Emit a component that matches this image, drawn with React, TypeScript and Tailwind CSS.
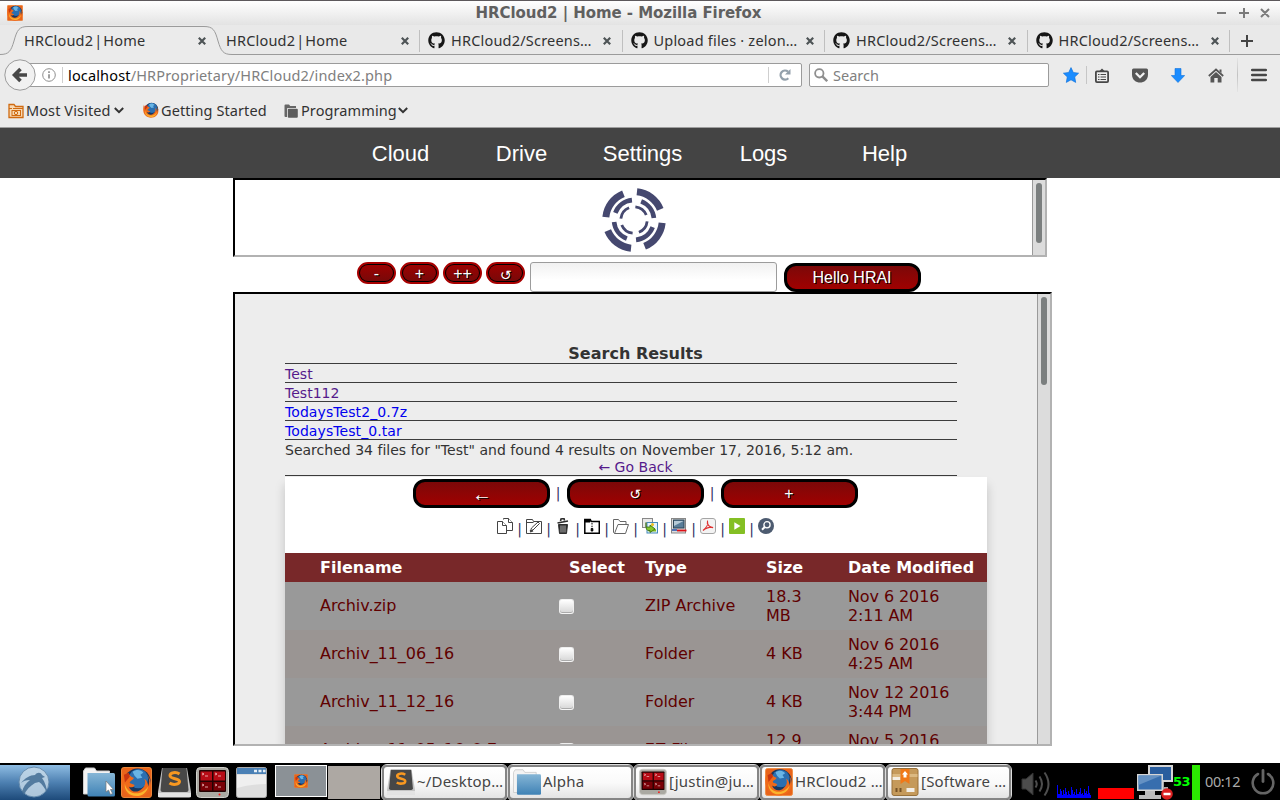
import React from "react";
import { FaGithub } from "react-icons/fa";

const ui = "font-['Noto_Sans',sans-serif] whitespace-nowrap pt-[2px] text-[14.5px] tracking-[0.2px]";

function Firefox({ size, square = false }: { size: number; square?: boolean }) {
  return (
    <svg width={size} height={size} viewBox="0 0 32 32" className="shrink-0">
      {square && <rect x="0.5" y="0.5" width="31" height="31" rx="2.5" fill="#e8641b" stroke="#f08a3c" />}
      <circle cx="17" cy="15" r="13.5" fill="#17375f" />
      <circle cx="18" cy="12" r="10" fill="#2b6fb0" />
      <path d="M12 5c4-3 9-2 11 1l-3 2 2 3-5 1-3-3z" fill="#69b5e5" />
      <path d="M2 5c0 3 1 4 1 6l5-4c1 2 2 3 5 4 1 2-4 3-4 5 1 2 4 1 5 3-2 3-5 2-6 1 2 6 9 7 13 3 4-3 5-7 3-11 3 2 4 5 4 8 2-5 1-9-1-12 5 6 5 14 0 19-6 6-17 6-23-1C-1 20 0 11 2 5z" fill="#ef6a1a" />
      <path d="M4 17c1 7 7 11 14 10 5-1 8-4 10-7-1 6-6 10-12 10C8 30 3 24 4 17z" fill="#fbb42c" />
      <path d="M3 8l5-2 1 4-5 6z" fill="#c8350f" />
    </svg>
  );
}

function CloseX() {
  return (
    <svg width="8" height="8" viewBox="0 0 8 8" className="mt-[1px] shrink-0">
      <path d="M.8.8l6.400 6.400M7.200.8L.8 7.200" stroke="#4e5456" strokeWidth="2.200" />
    </svg>
  );
}

function TitleBar() {
  return (
    <div className="flex h-[25px] w-full items-center border-t border-[#5d595c] bg-linear-to-b from-white to-[#e3e3e3] pl-[7px] pr-[10px]">
      <Firefox size={16} square />
      <div className="flex-1 pr-[2px] text-center font-['DejaVu_Sans',sans-serif] text-[15px] leading-[24px] font-bold text-[#606060]">
        <span className="tracking-[-0.06px]">HRCloud2 | Home - Mozilla Firefox</span>
      </div>
      <svg width="54" height="12" viewBox="0 0 54 12" className="shrink-0" fill="none" stroke="#7b7b7b" strokeWidth="2">
        <path d="M1 6h9M23 6h10M28 1v10M45 2l8 8M53 2l-8 8" />
      </svg>
    </div>
  );
}

function GithubTab({ title }: { title: string }) {
  return (
    <div className="flex h-[30px] w-[202.5px] shrink-0 items-center">
      <div className="mt-[1px] h-[22px] w-px bg-[#bfbfbf]" />
      <FaGithub size={17} color="#161616" className="ml-[8px] shrink-0" />
      <span className={ui + " ml-[6px] w-[152px] text-[#323232]"}>{title}</span>
      <CloseX />
    </div>
  );
}

function TabStrip() {
  return (
    <div className="relative flex h-[30px] w-full bg-[#e9e9e9]">
      <svg width="1280" height="30" viewBox="0 0 1280 30" className="absolute left-0 top-0">
        <path d="M0 29.5C9 29.5 11 26 14 16C17 5 19 1.5 28 1.5H204C213 1.5 215 5 218 16C221 26 223 29.5 232 29.5H1280V30H0Z" fill="#ebebeb" />
        <path d="M0 29.5C9 29.5 11 26 14 16C17 5 19 1.5 28 1.5H204C213 1.5 215 5 218 16C221 26 223 29.5 232 29.5H1280" fill="none" stroke="#9b9b9b" />
      </svg>
      <div className="relative flex w-full items-center">
        <span className={ui + " ml-[24px] w-[174px] text-[#323232] [word-spacing:-3px]"}>HRCloud2 | Home</span>
        <CloseX />
        <span className={ui + " ml-[20px] w-[175px] text-[#323232] [word-spacing:-3px]"}>HRCloud2 | Home</span>
        <CloseX />
        <div className="w-[10px] shrink-0" />
        <GithubTab title="HRCloud2/Screens…" />
        <GithubTab title="Upload files · zelon…" />
        <GithubTab title="HRCloud2/Screens…" />
        <GithubTab title="HRCloud2/Screens…" />
        <div className="mt-[1px] h-[22px] w-px shrink-0 bg-[#bfbfbf]" />
        <svg width="12" height="12" viewBox="0 0 12 12" className="ml-[11px] mt-[1px] shrink-0">
          <path d="M6 0v12M0 6h12" stroke="#444" strokeWidth="2" />
        </svg>
      </div>
    </div>
  );
}

function NavToolbar() {
  return (
    <div className="flex h-[40px] w-full items-center bg-[#ebebeb] pl-[4px]">
      <svg width="32" height="32" viewBox="0 0 32 32" className="relative z-10 shrink-0">
        <circle cx="16" cy="16" r="15.2" fill="#f1f1f1" stroke="#9b9b9b" />
        <path d="M10.500 16H23M16.500 10L10.500 16L16.500 22" fill="none" stroke="#474747" strokeWidth="3.600" />
      </svg>
      <div className="-ml-[8px] flex h-[24px] w-[774px] shrink-0 items-center rounded-r-[2px] border border-[#9b9b9b] bg-white pl-[13px]">
        <svg width="14" height="14" viewBox="0 0 14 14" className="shrink-0">
          <circle cx="7" cy="7" r="6.3" fill="none" stroke="#8f8f8f" />
          <path d="M7 6.3v4.2M7 3.2v1.8" stroke="#8f8f8f" strokeWidth="1.7" />
        </svg>
        <div className="ml-[6px] h-[16px] w-px bg-[#cfcfcf]" />
        <span className="ml-[5px] flex-1 whitespace-nowrap pt-[2px] font-['Noto_Sans',sans-serif] text-[14.5px] tracking-[0.15px] text-[#808080]">
          <span className="text-black">localhost</span>/HRProprietary/HRCloud2/index2.php
        </span>
        <div className="h-[16px] w-px bg-[#cfcfcf]" />
        <svg width="12" height="12" viewBox="0 0 12 12" className="ml-[10px] mr-[10px] shrink-0">
          <path d="M9.3 9.2A4.5 4.5 0 1 1 9 2.6" fill="none" stroke="#93a0ab" strokeWidth="2.3" />
          <path d="M11.5 0v5.6H6z" fill="#93a0ab" />
        </svg>
      </div>
      <div className="ml-[7px] flex h-[24px] w-[240px] shrink-0 items-center rounded-[2px] border border-[#9b9b9b] bg-white pl-[4px]">
        <svg width="14" height="14" viewBox="0 0 14 14" className="shrink-0" fill="none" stroke="#8f8f8f">
          <circle cx="5.3" cy="5.3" r="4.2" strokeWidth="1.8" />
          <path d="M8.4 8.4l4.8 4.8" strokeWidth="2.4" />
        </svg>
        <span className="ml-[5px] pt-[2px] font-['Noto_Sans',sans-serif] text-[14.5px] text-[#808080]">Search</span>
      </div>
      <svg width="16" height="16" viewBox="0 0 16 16" className="ml-[14px] shrink-0">
        <path d="M8 .6l2.3 4.9 5.3.7-3.9 3.7 1 5.500L8 12.800l-4.700 2.600 1-5.500L.4 6.200l5.300-.7z" fill="#1a8cff" stroke="#1274dc" strokeWidth=".7" />
      </svg>
      <div className="ml-[7px] h-[18px] w-px bg-[#c6c6c6]" />
      <svg width="14" height="15" viewBox="0 0 14 15" className="ml-[8px] shrink-0">
        <rect x=".9" y="3.400" width="12.200" height="10.700" rx="1" fill="#ededed" stroke="#474747" strokeWidth="1.800" />
        <path d="M4 3.500L7 .500l3 3z" fill="#474747" />
        <path d="M3 6.500h1.500M5.500 6.500H11M3 9h1.500M5.500 9H11M3 11.500h1.500M5.500 11.500H11" stroke="#474747" strokeWidth="1.200" />
      </svg>
      <svg width="16" height="15" viewBox="0 0 16 15" className="ml-[23px] shrink-0">
        <path d="M1.500.5h13q1.500 0 1.500 1.500v4.500C16 12 12 14.500 8 14.500S0 12 0 6.500V2Q0 .5 1.500.5z" fill="#565656" />
        <path d="M3.800 5l4.200 4.200L12.200 5" fill="none" stroke="#f0f0f0" strokeWidth="2.3" />
      </svg>
      <svg width="14" height="15" viewBox="0 0 14 15" className="ml-[23px] shrink-0">
        <path d="M4 .5h6v7h3.700L7 14.500.3 7.500H4z" fill="#1a8cff" stroke="#1274dc" strokeWidth=".6" />
      </svg>
      <svg width="16" height="15" viewBox="0 0 16 15" className="ml-[23px] shrink-0">
        <path d="M.8 8L8 1.500 15.200 8" fill="none" stroke="#565656" strokeWidth="1.700" />
        <path d="M2.500 9L8 4l5.500 5v5.500H9.700V10H6.300v4.500H2.500z" fill="#565656" />
        <path d="M11.500 1.500h2V5l-2-1.800z" fill="#565656" />
      </svg>
      <div className="ml-[13px] h-[34px] w-px bg-linear-to-b from-[#e4e4e4] via-[#c2c2c2] to-[#e4e4e4]" />
      <svg width="16" height="14" viewBox="0 0 16 14" className="mb-[1px] ml-[13px] shrink-0">
        <path d="M1.200 2h13.600M1.200 7h13.600M1.200 12h13.600" stroke="#474747" strokeWidth="2.600" strokeLinecap="round" />
      </svg>
    </div>
  );
}

function Chevron() {
  return (
    <svg width="10" height="7" viewBox="0 0 10 7" className="ml-[2px] shrink-0">
      <path d="M.8 1L5 5.200 9.200 1" fill="none" stroke="#333" strokeWidth="2" />
    </svg>
  );
}

function BookmarksBar() {
  const label =
    "font-['Noto_Sans',sans-serif] whitespace-nowrap pt-[2px] text-[14.5px] tracking-[0.1px] text-[#323232]";
  return (
    <div className="flex h-[33px] w-full items-center border-b border-[#9e9e9e] bg-[#ebebeb] pb-[2px] pl-[8px]">
      <svg width="16" height="16" viewBox="0 0 16 16" className="mt-[1px] shrink-0" fill="none" stroke="#d06a10">
        <path d="M1 14.500V1.500h5l1.500 2H15v11z" fill="#f7d9b4" strokeWidth="1.300" />
        <path d="M1 5.500h3M5 5.500h10" />
        <rect x="4" y="7.500" width="8.500" height="5" />
        <circle cx="8" cy="10" r="1.700" />
      </svg>
      <span className={label + " ml-[2px] w-[86px]"}>Most Visited</span>
      <Chevron />
      <div className="w-[19px]" />
      <Firefox size={16} />
      <span className={label + " ml-[2px] w-[107px]"}>Getting Started</span>
      <svg width="14" height="14" viewBox="0 0 14 14" className="ml-[16px] mt-[1px] shrink-0">
        <path d="M.5 12V1.500Q.5.500 1.500.500H5l1.200 1.500H12V4H4Q3 4 3 5v8H1.500q-1 0-1-1z" fill="#666" />
        <rect x="3.800" y="4.700" width="10" height="9" rx="1" fill="#5c5c5c" />
      </svg>
      <span className={label + " ml-[3px] w-[95px]"}>Programming</span>
      <Chevron />
    </div>
  );
}

function SiteNav() {
  return (
    <nav className="flex h-[50px] w-full items-center justify-center bg-[#444] font-['Liberation_Sans',sans-serif] text-[22px] text-white">
      <div className="flex pl-[5px]">
        {["Cloud", "Drive", "Settings", "Logs", "Help"].map((t) => (
          <a key={t} className="w-[121px] text-center">{t}</a>
        ))}
      </div>
    </nav>
  );
}

function Swirl() {
  const ring = (r: number, w: number, start: number, span: number) => (
    <circle
      cx="32" cy="32" r={r} pathLength={360} strokeWidth={w}
      strokeDasharray={`${span} ${90 - span}`} transform={`rotate(${start} 32 32)`}
    />
  );
  return (
    <svg width="64" height="64" viewBox="0 0 64 64" fill="none" stroke="#45486f">
      {ring(28.3, 7, -84, 62)}
      {ring(20, 4.6, -69, 63)}
      {ring(13.2, 2.8, -84, 62)}
    </svg>
  );
}

function ScrollTrack({ thumb }: { thumb: string }) {
  return (
    <div className="w-[13px] shrink-0 border-l border-[#9a9a9a] bg-[#dcdcdc] pl-[3px] pt-[3px]">
      <div className={"w-[6px] rounded-full bg-[#7b7f7f] " + thumb} />
    </div>
  );
}

function SmallButton({ children }: { children: React.ReactNode }) {
  return (
    <button className="h-[22px] w-[39px] rounded-[11px] border-2 border-[#a80000] bg-black p-[1px]">
      <span className="flex h-full w-full items-center justify-center rounded-[8px] bg-linear-to-b from-[#9d0000] to-[#780808] pt-[2px] font-['Liberation_Sans','DejaVu_Sans',sans-serif] text-[16px] leading-none text-white [text-shadow:1px_1px_0_#000]">
        {children}
      </span>
    </button>
  );
}

function WideButton({ children }: { children: React.ReactNode }) {
  return (
    <button className="h-[29px] w-[137px] rounded-[12px] border-[3px] border-black bg-linear-to-b from-[#7c0808] to-[#a00000] text-center font-['Liberation_Sans','DejaVu_Sans',sans-serif] text-[16px] leading-[23px] text-white [text-shadow:1px_1px_0_#000]">
      {children}
    </button>
  );
}

const toolIcons: React.ReactNode[] = [
  <g fill="#fff" stroke="#444">
    <path d="M6.500 1.500V.500h5l4 4v8H9.500" /><path d="M11.500.500v4h4" />
    <path d="M.500 3.500h5l4 4v8h-9z" /><path d="M5.500 3.500v4h4" />
  </g>,
  <g fill="none" stroke="#444">
    <path d="M.500 15.500v-14h6l1 2h8v12z" /><path d="M.500 4.500h7" />
    <path d="M4.500 13l1-3 6.500-6 1.500 1.500-6.500 6.500z" /><path d="M4 13.500l3-1" strokeWidth="2" />
  </g>,
  <g fill="#2d2d2d" stroke="#2d2d2d">
    <path d="M3.500 6.500h9l-1 9h-7z" /><path d="M2.500 5l10.500-2M5.500 3l.500-2 3-.500.500 2" fill="none" strokeWidth="1.600" />
    <path d="M6 7.500v7M8 7.500v7M10 7.500v7" stroke="#ccc" strokeWidth=".8" />
  </g>,
  <g fill="none" stroke="#000">
    <path d="M.800 15.200V1.500h5.500l1 2h8v11.700z" strokeWidth="1.500" /><path d="M1 2h5v2H1z" fill="#000" />
    <path d="M8 5v5" strokeWidth="1" strokeDasharray="1.500 1.200" /><path d="M7.200 10.500h1.600v2.500H7.200z" fill="#000" />
  </g>,
  <g fill="none" stroke="#666">
    <path d="M1.500 15.500l-1-1v-13h5l1.500 2h6v3" /><path d="M1.500 15.500L5 6.500h10.500l-3 9z" />
  </g>,
  <g>
    <rect x=".5" y=".5" width="10" height="9" fill="#e9e9e9" stroke="#888" />
    <rect x="5" y="4.500" width="10.500" height="10.500" fill="#e4f2fd" stroke="#4589b8" />
    <path d="M6.500 13.500V11l3-3 4.500 3.500v2z" fill="#7fba1d" />
    <circle cx="10.500" cy="6.500" r="1.500" fill="#f0bf19" />
    <path d="M4 4.500v4.500h4v-2l5 4-5 3.500v-2H6Q4 12 4 9z" fill="#86c92b" stroke="#396b10" strokeWidth=".8" />
  </g>,
  <g>
    <rect x=".5" y=".5" width="14" height="14.500" fill="#ddd" stroke="#888" />
    <rect x="2.500" y="2" width="10.500" height="8" fill="#587d99" stroke="#2c4557" />
    <path d="M3 3h9.500L3 8z" fill="#b6cad7" /><path d="M1 12h5" stroke="#224caa" strokeWidth="1.500" />
    <path d="M6 12.500h9.500" stroke="#e01016" strokeWidth="1.800" />
  </g>,
  <g>
    <rect x=".5" y=".5" width="15" height="15" rx="2.500" fill="#f3f3f3" stroke="#a5a5a5" />
    <path d="M3 12.500C6 10 8.500 6 7.500 3.500 6.500 6 10 10 13 9.500 10 8.500 5 10.500 3 12.500z" fill="none" stroke="#df3030" strokeWidth="1.200" />
  </g>,
  <g>
    <rect width="16" height="16" rx="1" fill="#84bf24" /><path d="M5.300 4.200L11.500 8l-6.200 3.800z" fill="#fff" />
  </g>,
  <g fill="none" stroke="#fff" strokeWidth="1.300">
    <circle cx="8" cy="8" r="8" fill="#4d5b70" stroke="none" /><circle cx="9" cy="6.800" r="3.100" />
    <path d="M6.700 9L4 11.700" strokeWidth="2" />
  </g>,
];

function SearchResults() {
  const line = "border-b border-[#3c3c3c]";
  return (
    <div className="w-[672px] text-[14px] leading-[18px] tracking-[0.015px] text-[#333]">
      <h1 className={line + " h-[20px] pl-[29px] pt-[1px] text-center text-[16px] leading-[18px] font-bold"}>
        Search Results
      </h1>
      <div className={line + " h-[19px] pt-[1px] text-[#551a8b]"}>Test</div>
      <div className={line + " h-[19px] pt-[1px] text-[#551a8b]"}>Test112</div>
      <div className={line + " h-[19px] pt-[1px] tracking-[0.08px] text-[#0000ee]"}>TodaysTest2_0.7z</div>
      <div className={line + " h-[19px] pt-[1px] tracking-[0.08px] text-[#0000ee]"}>TodaysTest_0.tar</div>
      <div className={line + " h-[36px] pt-[2px] leading-[17px]"}>
        <p>Searched 34 files for "Test" and found 4 results on November 17, 2016, 5:12 am.</p>
        <p className="pl-[29px] text-center text-[#551a8b]">← Go Back</p>
      </div>
    </div>
  );
}

const files = [
  ["Archiv.zip", "ZIP Archive", "18.3 MB", "Nov 6 2016 2:11 AM"],
  ["Archiv_11_06_16", "Folder", "4 KB", "Nov 6 2016 4:25 AM"],
  ["Archiv_11_12_16", "Folder", "4 KB", "Nov 12 2016 3:44 PM"],
  ["Archive_11_05_16_0.7z", "7Z File", "12.9 MB", "Nov 5 2016 9:21 PM"],
];

function FileTable() {
  const cols = "grid grid-cols-[239px_86px_121px_82px_139px] items-center pl-[35px]";
  return (
    <div className="mt-[17px] text-[16px] leading-[19px]">
      <div className={cols + " h-[29px] bg-[#782829] font-bold text-white"}>
        <span>Filename</span>
        <span className="pl-[10px]">Select</span>
        <span>Type</span>
        <span>Size</span>
        <span className="whitespace-nowrap">Date Modified</span>
      </div>
      {files.map(([name, type, size, date], i) => (
        <div key={name} className={cols + " h-[48px] text-[#600000] " + (i % 2 ? "bg-[#9a9593]" : "bg-[#999999]")}>
          <span className="pb-[2px] tracking-[-0.06px]">{name}</span>
          <span className="h-[15px] w-[15px] rounded-[3px] border border-[#eee] border-b-[#f5f5f5] bg-linear-to-b from-white to-[#d6d6d6] shadow-[inset_0_-1px_0_#aaa]" />
          <span className="pb-[2px]">{type}</span>
          <span className={size.length > 6 ? "w-[50px]" : "pb-[2px]"}>{size}</span>
          <span className="w-[104px] tracking-[-0.1px]">{date}</span>
        </div>
      ))}
    </div>
  );
}

function FileManager() {
  return (
    <div className="mt-[1px] h-[420px] w-[702px] bg-white pt-[2px] shadow-[0_8px_10px_rgba(0,0,0,0.18)]">
      <div className="flex h-[29px] items-center justify-center pr-[2px] text-[14px] text-[#336]">
        <WideButton><span className="block pl-[2px] text-[20px] leading-[25px] font-light">←</span></WideButton>
        <span className="w-[17px] text-center">|</span>
        <WideButton><span className="text-[14px]">↺</span></WideButton>
        <span className="w-[17px] text-center">|</span>
        <WideButton>+</WideButton>
      </div>
      <div className="mt-[10px] flex h-[18px] items-start justify-center pr-[1px] text-[14px] leading-[18px] text-[#336]">
        {toolIcons.map((icon, i) => (
          <React.Fragment key={i}>
            {i > 0 && <span className="w-[13px] pt-[2px] text-center">|</span>}
            <svg width="16" height="16" viewBox="0 0 16 16" className="shrink-0">{icon}</svg>
          </React.Fragment>
        ))}
      </div>
      <FileTable />
    </div>
  );
}

function Page() {
  return (
    <main className="h-[585px] w-full overflow-hidden bg-white pl-[233px]">
      <section className="flex h-[79px] w-[814px] border-2 border-r-[#b2b2b2] border-b-[#b2b2b2] border-l-black border-t-black bg-white">
        <div className="flex flex-1 justify-center pt-[8px]"><Swirl /></div>
        <ScrollTrack thumb="h-[60px]" />
      </section>
      <div className="flex h-[35px] items-start pl-[124px] pt-[5px]">
        <div className="flex gap-[4px]">
          <SmallButton>-</SmallButton>
          <SmallButton>+</SmallButton>
          <SmallButton>++</SmallButton>
          <SmallButton><span className="pt-[2px] text-[14px]">↺</span></SmallButton>
        </div>
        <div className="ml-[5px] h-[30px] w-[247px] rounded-[3px] border border-[#9c9c9c] bg-linear-to-b from-[#f1f1f1] to-white to-60%" />
        <div className="ml-[7px] pt-[1px]"><WideButton><span className="pr-[1px]">Hello HRAI</span></WideButton></div>
      </div>
      <section className="flex h-[454px] w-[819px] border-2 border-r-[#b2b2b2] border-b-[#b2b2b2] border-l-black border-t-black bg-[#ededed]">
        <div className="flex-1 overflow-hidden pl-[50px] pt-[50px] font-['DejaVu_Sans',sans-serif]">
          <SearchResults />
          <FileManager />
        </div>
        <ScrollTrack thumb="h-[88px]" />
      </section>
    </main>
  );
}

function FolderIcon({ cursor = false }: { cursor?: boolean }) {
  return (
    <svg width="32" height="32" viewBox="0 0 32 32" className="shrink-0">
      <defs>
        <linearGradient id="folder" x1="0" y1="0" x2="0" y2="1">
          <stop offset="0" stopColor="#86b6d6" /><stop offset="1" stopColor="#3f82b5" />
        </linearGradient>
      </defs>
      <path d="M.5 28V5l2-3h9l2 3h13v23z" fill="#f3f3f3" stroke="#ccc" />
      <path d="M4.500 7h26q1.500 0 1.500 1.500V29q0 1.500-1.500 1.500H6Q4.500 30.500 4.500 29z" fill="url(#folder)" />
      {cursor && <path d="M23 15v11l2.500-2 2 4.500 2-1-2-4h3z" fill="#fff" stroke="#777" strokeWidth=".7" />}
    </svg>
  );
}

function SublimeIcon() {
  return (
    <svg width="33" height="31" viewBox="0 0 33 31" className="shrink-0">
      <path d="M4 1h25l4 24v5H0v-5z" fill="#c4c4c4" />
      <path d="M4.500 1h24l2 22q0 2-2 2h-24q-2 0-2-2z" fill="#474747" />
      <path d="M0 26h33v3q0 1.500-2 1.500H2Q0 30.500 0 29z" fill="#e3e3e3" />
      <path d="M21.500 7C18 4.500 12 5.500 12 8.500c0 4 9.500 2.500 9.500 6 0 3-6.500 4-10 1.500" fill="none" stroke="#f89820" strokeWidth="3" />
    </svg>
  );
}

function TerminalIcon() {
  return (
    <svg width="33" height="31" viewBox="0 0 33 31" className="shrink-0">
      <rect x=".5" y=".5" width="32" height="30" rx="4" fill="#aaa9a2" stroke="#d0d0cb" />
      <rect x="3" y="3" width="27" height="22" rx="1" fill="#230303" />
      <path d="M4.500 4.500h11.500v9H4.500zM17.500 4.500H29v9H17.500z" fill="#b70c16" />
      <path d="M4.500 15h11.500v8.500H4.500zM17.500 15H29v8.500H17.500z" fill="#790006" />
      <path d="M6 6l2 1-2 1M19 6l2 1-2 1M6 17l2 1-2 1M19 17l2 1-2 1M9 9h3M22 9h3M9 20h3M22 20h3" fill="none" stroke="#f2caca" strokeWidth=".8" />
      <circle cx="23.500" cy="27.500" r="1" fill="#f11" />
    </svg>
  );
}

function WindowIcon() {
  return (
    <svg width="31" height="31" viewBox="0 0 31 31" className="shrink-0">
      <rect x=".5" y=".5" width="30" height="30" rx="2" fill="#dedede" stroke="#aaa" />
      <path d="M1 1h29v6H1z" fill="#4a80b5" />
      <path d="M18 4h3M22.500 4h3M27 4h2.500" stroke="#e6eff7" strokeWidth="2.500" />
      <path d="M1 8h29v9Q15 17 1 21z" fill="#efefef" />
    </svg>
  );
}

function PackageIcon() {
  return (
    <svg width="27" height="28" viewBox="0 0 27 28" className="shrink-0">
      <rect x=".5" y=".5" width="26" height="27" rx="2" fill="#c59a5b" stroke="#98713a" />
      <path d="M1 6h25v3H1z" fill="#dbb982" />
      <path d="M1 9h8v3H1z" fill="#f4efe5" />
      <path d="M9 1h9v15l-4.500-3L9 16z" fill="#f07818" />
      <path d="M13.500 3l3 3.500h-1.500v3h-3v-3h-1.500z" fill="#fff" />
      <path d="M15 20h8v4h-8z" fill="#f2eee7" />
      <path d="M5 24v-4M9 24v-4" stroke="#765326" strokeWidth="2" />
    </svg>
  );
}

function Task({ icon, label }: { icon: React.ReactNode; label: string }) {
  return (
    <div className="flex h-[35px] w-[125px] shrink-0 items-center overflow-hidden rounded-[5px] border-2 border-[#858585] bg-linear-to-b from-white via-[#fafafa] to-[#e4e4e4] pl-[2px] outline outline-[#ddd]">
      <span className="flex w-[29px] shrink-0 items-center justify-center [&>svg]:h-[28px] [&>svg]:w-[28px]">{icon}</span>
      <span className="ml-[2px] whitespace-nowrap pb-[1px] font-['Noto_Sans',sans-serif] text-[15px] tracking-[0.2px] text-[#444]">{label}</span>
    </div>
  );
}

const cpu = [12, 3, 3, 8, 6, 2, 7, 3, 9, 5, 2, 6, 3, 2, 10, 7, 3, 5, 2, 8, 3, 3, 5, 9, 3, 4, 2, 8, 4, 6, 3, 11, 4, 2];

function Taskbar() {
  return (
    <footer className="flex h-[37px] w-full items-center bg-black pt-[1px]">
      <div className="flex h-[35px] w-[70px] shrink-0 items-center justify-center bg-linear-to-b from-[#8fbde3] via-[#4d80b1] to-[#1d4a7a]">
        <svg width="32" height="32" viewBox="0 0 32 32" className="mr-[2px]">
          <circle cx="16" cy="16" r="15" fill="#c6d9e9" fillOpacity=".85" stroke="#668cae" />
          <path d="M3 17C7 12 12 9 17 9c2-3 6-3 7 0l3 2-3 1c3 4 5 10 5 15-2-5-5-9-8-11l-4 1c-5 3-9 7-11 12l-2-3c1-5 4-9 8-12-4 0-7 1-9 3z" fill="#426c93" fillOpacity=".85" />
        </svg>
      </div>
      <div className="ml-[13px] flex shrink-0 items-center">
        <FolderIcon cursor />
        <div className="ml-[6px]"><Firefox size={31} square /></div>
        <div className="ml-[6px]"><SublimeIcon /></div>
        <div className="ml-[5px]"><TerminalIcon /></div>
        <div className="ml-[7px]"><WindowIcon /></div>
      </div>
      <div className="ml-[8px] mb-[2px] flex h-[32px] w-[52px] shrink-0 items-center justify-center border border-white bg-[#8b9196]">
        <Firefox size={14} square />
      </div>
      <div className="ml-[1px] h-[33px] w-[52px] shrink-0 bg-[#ada8a3]" />
      <div className="ml-[2px] flex shrink-0 gap-[1px]">
        <Task icon={<SublimeIcon />} label="~/Desktop…" />
        <Task icon={<FolderIcon />} label="Alpha" />
        <Task icon={<TerminalIcon />} label="[justin@ju…" />
        <Task icon={<Firefox size={28} square />} label="HRCloud2 …" />
        <Task icon={<PackageIcon />} label="[Software …" />
      </div>
      <svg width="30" height="28" viewBox="0 0 30 28" className="ml-[10px] mt-[3px] shrink-0">
        <path d="M1 9h4l7-6v22l-7-6H1z" fill="#4c4c4c" stroke="#333" />
        <path d="M14.500 10.500q2.500 3.500 0 7M18.500 6.500q5 7.500 0 15M23.500 2.500q8 11.500 0 23" fill="none" stroke="#4e4e4e" strokeWidth="2" />
      </svg>
      <svg width="36" height="34" viewBox="0 0 36 34" className="ml-[5px] mb-[2px] shrink-0">
        {cpu.map((h, i) => <rect key={i} x={i + 1} y={34 - h - 1} width="1" height={h + 1} fill="#00f" />)}
      </svg>
      <div className="ml-[6px] mt-[22px] h-[11px] w-[36px] shrink-0 bg-[#ff0000]" />
      <svg width="36" height="35" viewBox="0 0 36 35" className="ml-[3px] shrink-0">
        <path d="M11 0h25v17H11z" fill="#d5d5d5" /><path d="M13 2h21v13H13z" fill="#295d9e" />
        <path d="M20 17h7v5h4v3H18z" fill="#aaa" />
        <path d="M0 9h26v17H0z" fill="#d5d5d5" /><path d="M1.500 10.500h23v14h-23z" fill="#376eae" />
        <path d="M1.500 10.500h23L1.500 20z" fill="#6491c3" />
        <path d="M8 26h10v4h6v4H2v-4h6z" fill="#bdbdbd" />
        <circle cx="30" cy="29" r="5.800" fill="#db2020" /><path d="M26.500 29h7" stroke="#fff" strokeWidth="2.500" />
      </svg>
      <span className="w-[19px] shrink-0 pb-[1px] font-['DejaVu_Sans',sans-serif] text-[13px] font-bold tracking-[-0.5px] text-[#00ff00]">53</span>
      <div className="h-[35px] w-[8px] shrink-0 bg-[#2be900]" />
      <span className="ml-[5px] w-[37px] shrink-0 whitespace-nowrap font-['Noto_Sans',sans-serif] text-[14.5px] tracking-[-0.4px] text-[#aaa]">00:12</span>
      <svg width="24" height="26" viewBox="0 0 24 26" className="ml-[9px] mb-[1px] shrink-0" fill="none" stroke="#656565" strokeLinecap="round">
        <path d="M7 5A10.300 10.300 0 1 0 17 5" strokeWidth="2.600" /><path d="M12 1.500v11" strokeWidth="2.800" />
      </svg>
    </footer>
  );
}

export default function App() {
  return (
    <div className="flex h-[800px] w-[1280px] flex-col overflow-hidden bg-white">
      <TitleBar />
      <TabStrip />
      <NavToolbar />
      <BookmarksBar />
      <SiteNav />
      <Page />
      <Taskbar />
    </div>
  );
}
